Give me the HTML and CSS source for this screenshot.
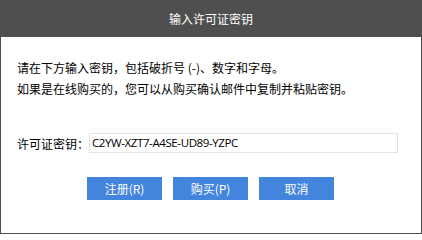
FILE: index.html
```html
<!DOCTYPE html>
<html lang="zh-CN">
<head>
<meta charset="utf-8">
<title>输入许可证密钥</title>
<link rel="stylesheet" href="styles.css">
</head>
<body>
<div class="window">
  <div class="titlebar">输入许可证密钥</div>
  <div class="content">
    <p class="intro">请在下方输入密钥，包括破折号 (-)、数字和字母。<br>如果是在线购买的，您可以从购买确认邮件中复制并粘贴密钥。</p>
    <div class="keyrow">
      <span class="label">许可证密钥：</span>
      <div class="input">C2YW-XZT7-A4SE-UD89-YZPC</div>
    </div>
    <div class="buttons">
      <div class="btn">注册(R)</div>
      <div class="btn">购买(P)</div>
      <div class="btn">取消</div>
    </div>
  </div>
</div>
</body>
</html>
```
FILE: styles.css
```css
html, body {
  margin: 0;
  padding: 0;
  background: #ffffff;
}
.window {
  width: 422px;
  height: 234px;
  box-sizing: border-box;
  border: 1px solid #4f4f4f;
  border-top: none;
  background: #ffffff;
  font-family: "Noto Sans CJK SC", "Microsoft YaHei", sans-serif;
  font-size: 12px;
  color: #000000;
}
.titlebar {
  height: 37px;
  margin: 0 -1px;
  background: #4f4f4f;
  color: #ffffff;
  font-size: 12px;
  line-height: 37px;
  text-align: center;
}
.content {
  padding: 20px 0 0 16px;
}
.intro {
  margin: 0;
  line-height: 21px;
}
.keyrow {
  display: flex;
  align-items: center;
  margin-top: 34px;
}
.label {
  width: 72px;
}
.input {
  width: 309px;
  height: 20px;
  box-sizing: border-box;
  border: 1px solid #e3e3e3;
  padding-left: 2px;
  line-height: 18px;
  font-family: "Open Sans", "Noto Sans CJK SC", sans-serif;
  font-size: 11.5px;
  letter-spacing: -0.4px;
  color: #000000;
}
.buttons {
  display: flex;
  gap: 11px;
  margin-top: 24px;
  margin-left: -16px;
  padding-left: 86px;
}
.btn {
  width: 75px;
  height: 23px;
  background: #4384dc;
  color: #ffffff;
  line-height: 23px;
  text-align: center;
}
```
